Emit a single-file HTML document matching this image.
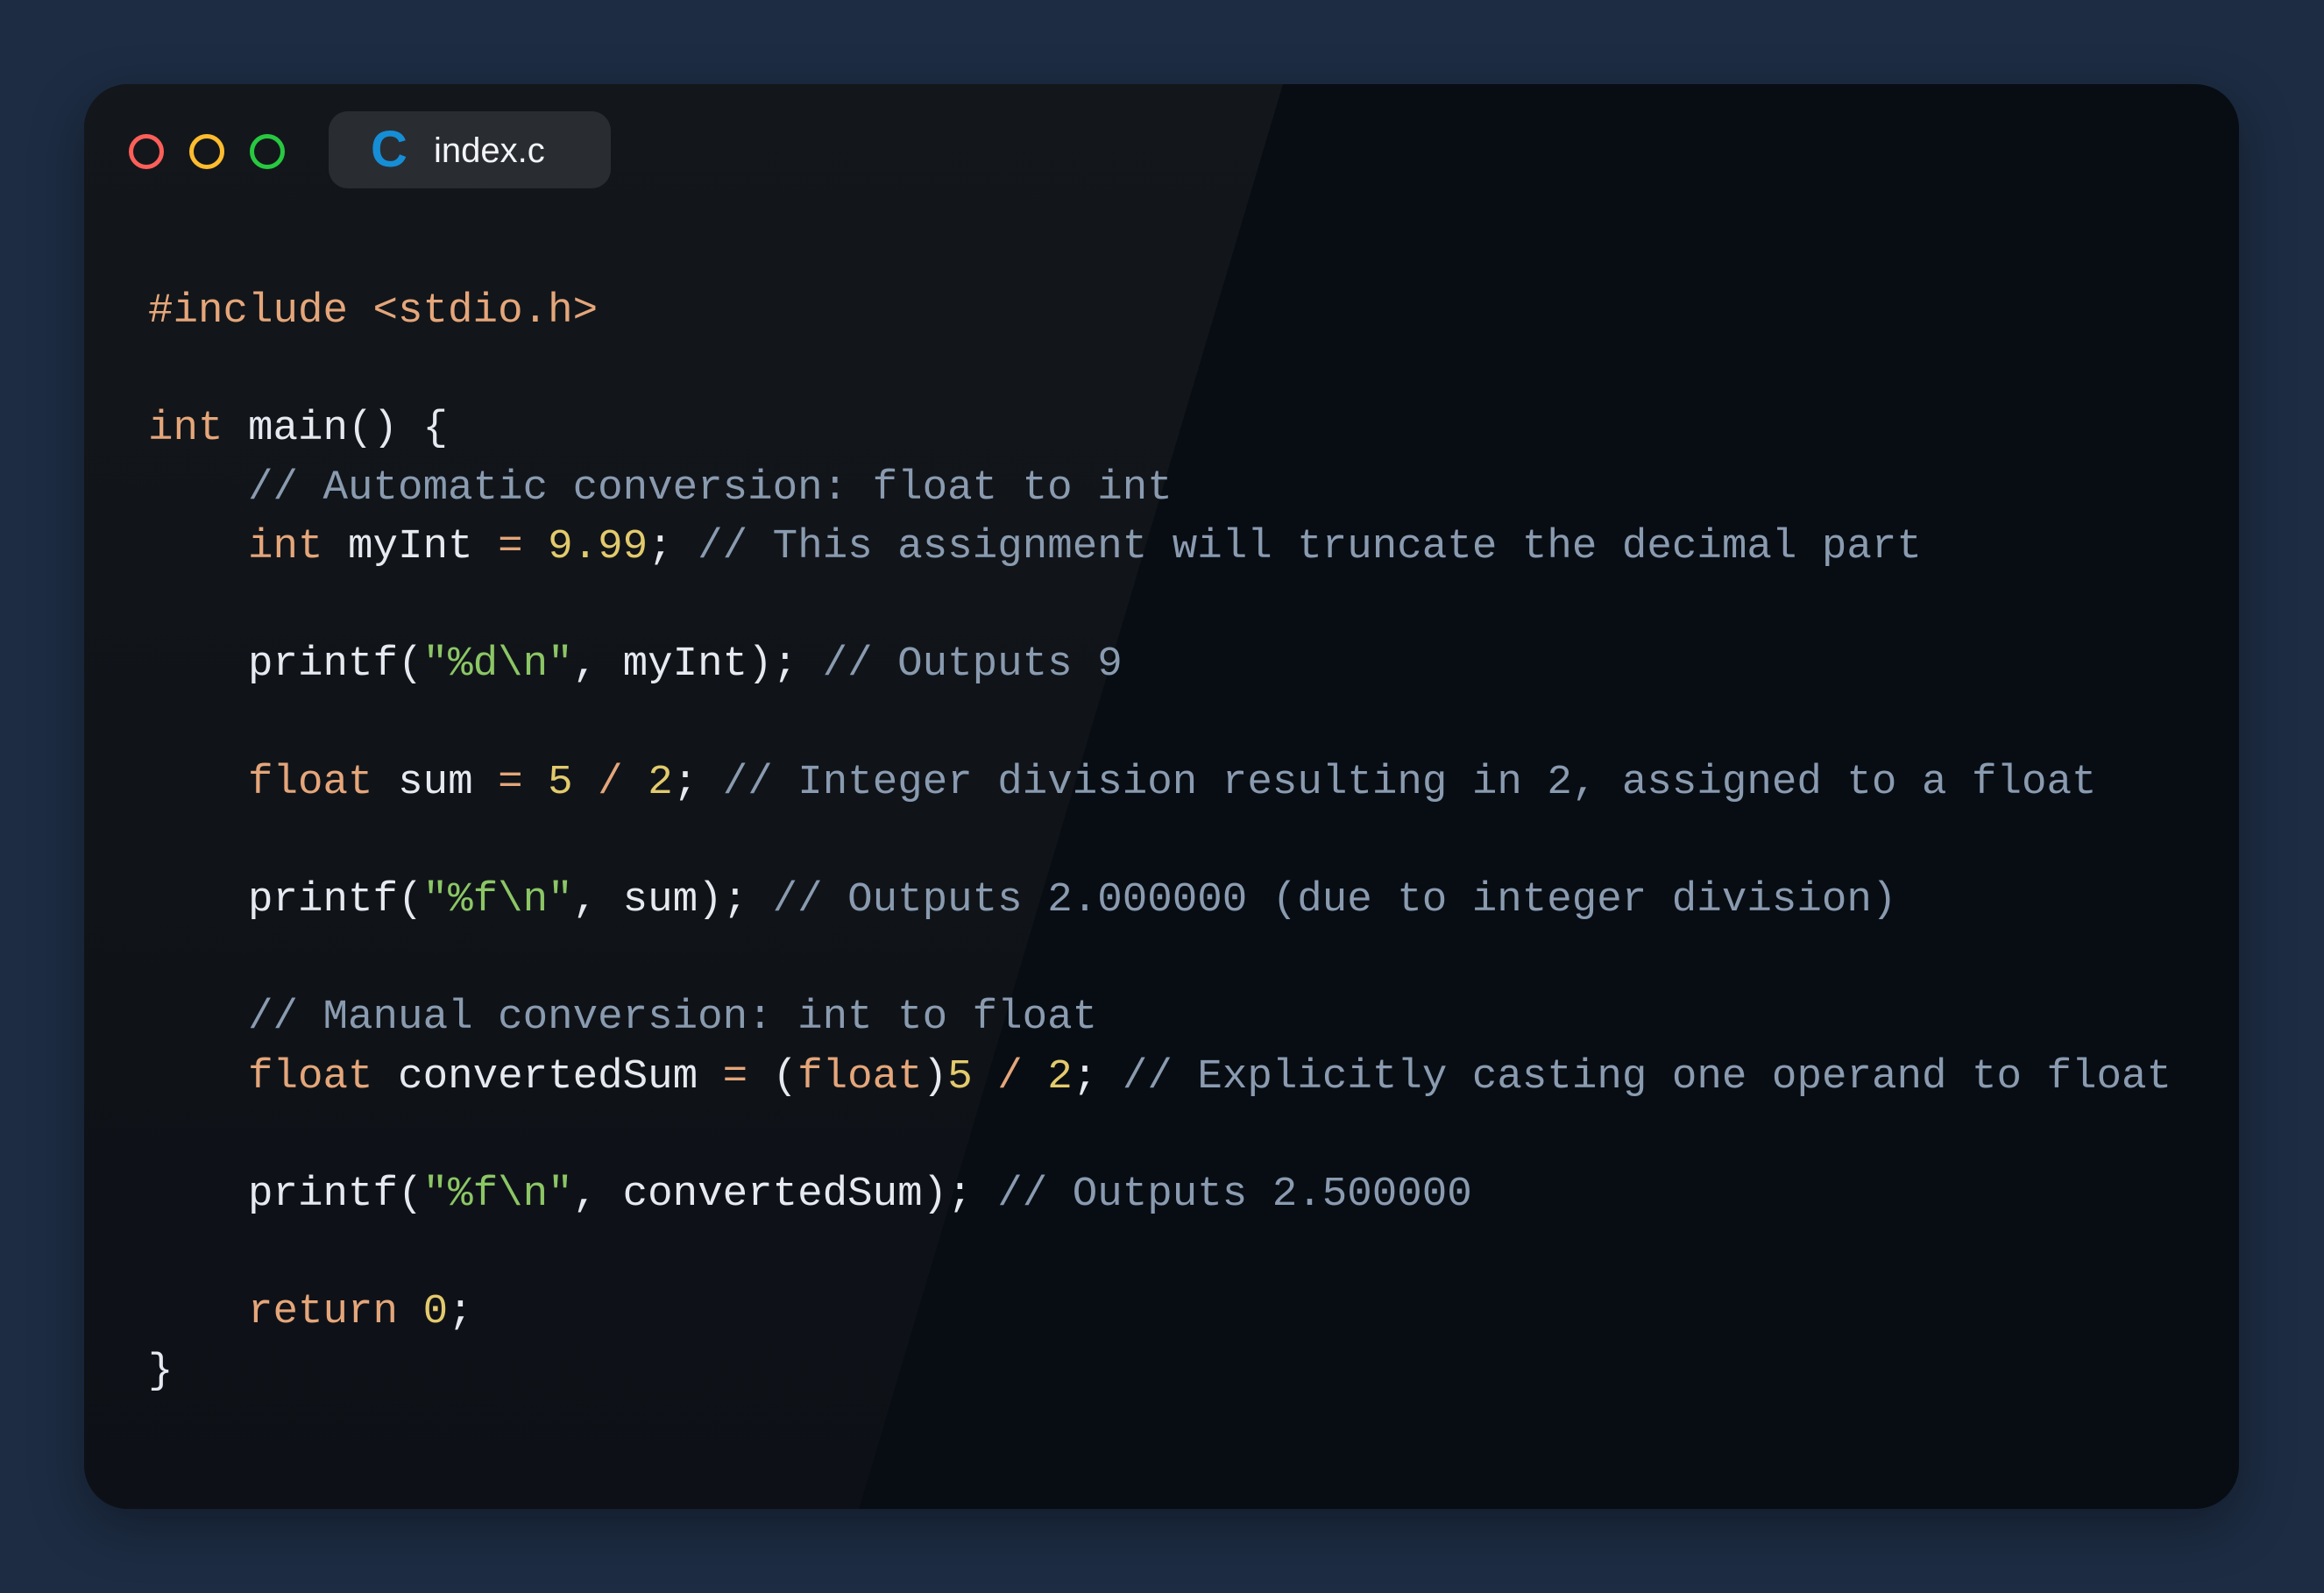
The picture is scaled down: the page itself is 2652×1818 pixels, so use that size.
<!DOCTYPE html>
<html><head><meta charset="utf-8"><style>
html,body{margin:0;padding:0}
body{width:2652px;height:1818px;background:#1d2c43;position:relative;overflow:hidden}
.win{position:absolute;left:96px;top:96px;width:2459px;height:1626px;border-radius:50px;background:#080d14;overflow:hidden;box-shadow:0 20px 60px rgba(0,0,0,.35)}
.light{position:absolute;left:0;top:0;width:100%;height:100%;background:linear-gradient(180deg,#13171b,#0d1117);clip-path:polygon(0 0,1368px 0,884px 1626px,0 1626px)}
.dot{position:absolute;top:152px;width:30px;height:30px;border-radius:50%;border:5px solid}
.tab{position:absolute;left:279px;top:31px;width:322px;height:88px;border-radius:22px;background:#292d32}
.tab .c{position:absolute;left:48px;top:10px;font:bold 58px "Liberation Sans",sans-serif;color:#168ed6}
.tab .n{position:absolute;left:120px;top:23px;font:40px "Liberation Sans",sans-serif;color:#f2f4f7}
pre{position:absolute;left:73px;top:226px;margin:0;font:47.5px/67.2px "Liberation Mono",monospace;color:#e6e9ef}
.k{color:#e5a67a}.cm{color:#8a9bb0}.nu{color:#e3ca6c}.s{color:#8cc665}
</style></head><body>
<div class="win"><div class="light"></div>
<div class="dot" style="left:51px;top:57px;border-color:#ff5f59"></div>
<div class="dot" style="left:120px;top:57px;border-color:#febc2e"></div>
<div class="dot" style="left:189px;top:57px;border-color:#28c840"></div>
<div class="tab"><span class="c">C</span><span class="n">index.c</span></div>
<pre><span class="k">#include &lt;stdio.h&gt;</span>

<span class="k">int</span> main() {
    <span class="cm">// Automatic conversion: float to int</span>
    <span class="k">int</span> myInt <span class="k">=</span> <span class="nu">9.99</span>; <span class="cm">// This assignment will truncate the decimal part</span>

    printf(<span class="s">"%d\n"</span>, myInt); <span class="cm">// Outputs 9</span>

    <span class="k">float</span> sum <span class="k">=</span> <span class="nu">5</span> <span class="k">/</span> <span class="nu">2</span>; <span class="cm">// Integer division resulting in 2, assigned to a float</span>

    printf(<span class="s">"%f\n"</span>, sum); <span class="cm">// Outputs 2.000000 (due to integer division)</span>

    <span class="cm">// Manual conversion: int to float</span>
    <span class="k">float</span> convertedSum <span class="k">=</span> (<span class="k">float</span>)<span class="nu">5</span> <span class="k">/</span> <span class="nu">2</span>; <span class="cm">// Explicitly casting one operand to float</span>

    printf(<span class="s">"%f\n"</span>, convertedSum); <span class="cm">// Outputs 2.500000</span>

    <span class="k">return</span> <span class="nu">0</span>;
}</pre>
</div>
</body></html>
